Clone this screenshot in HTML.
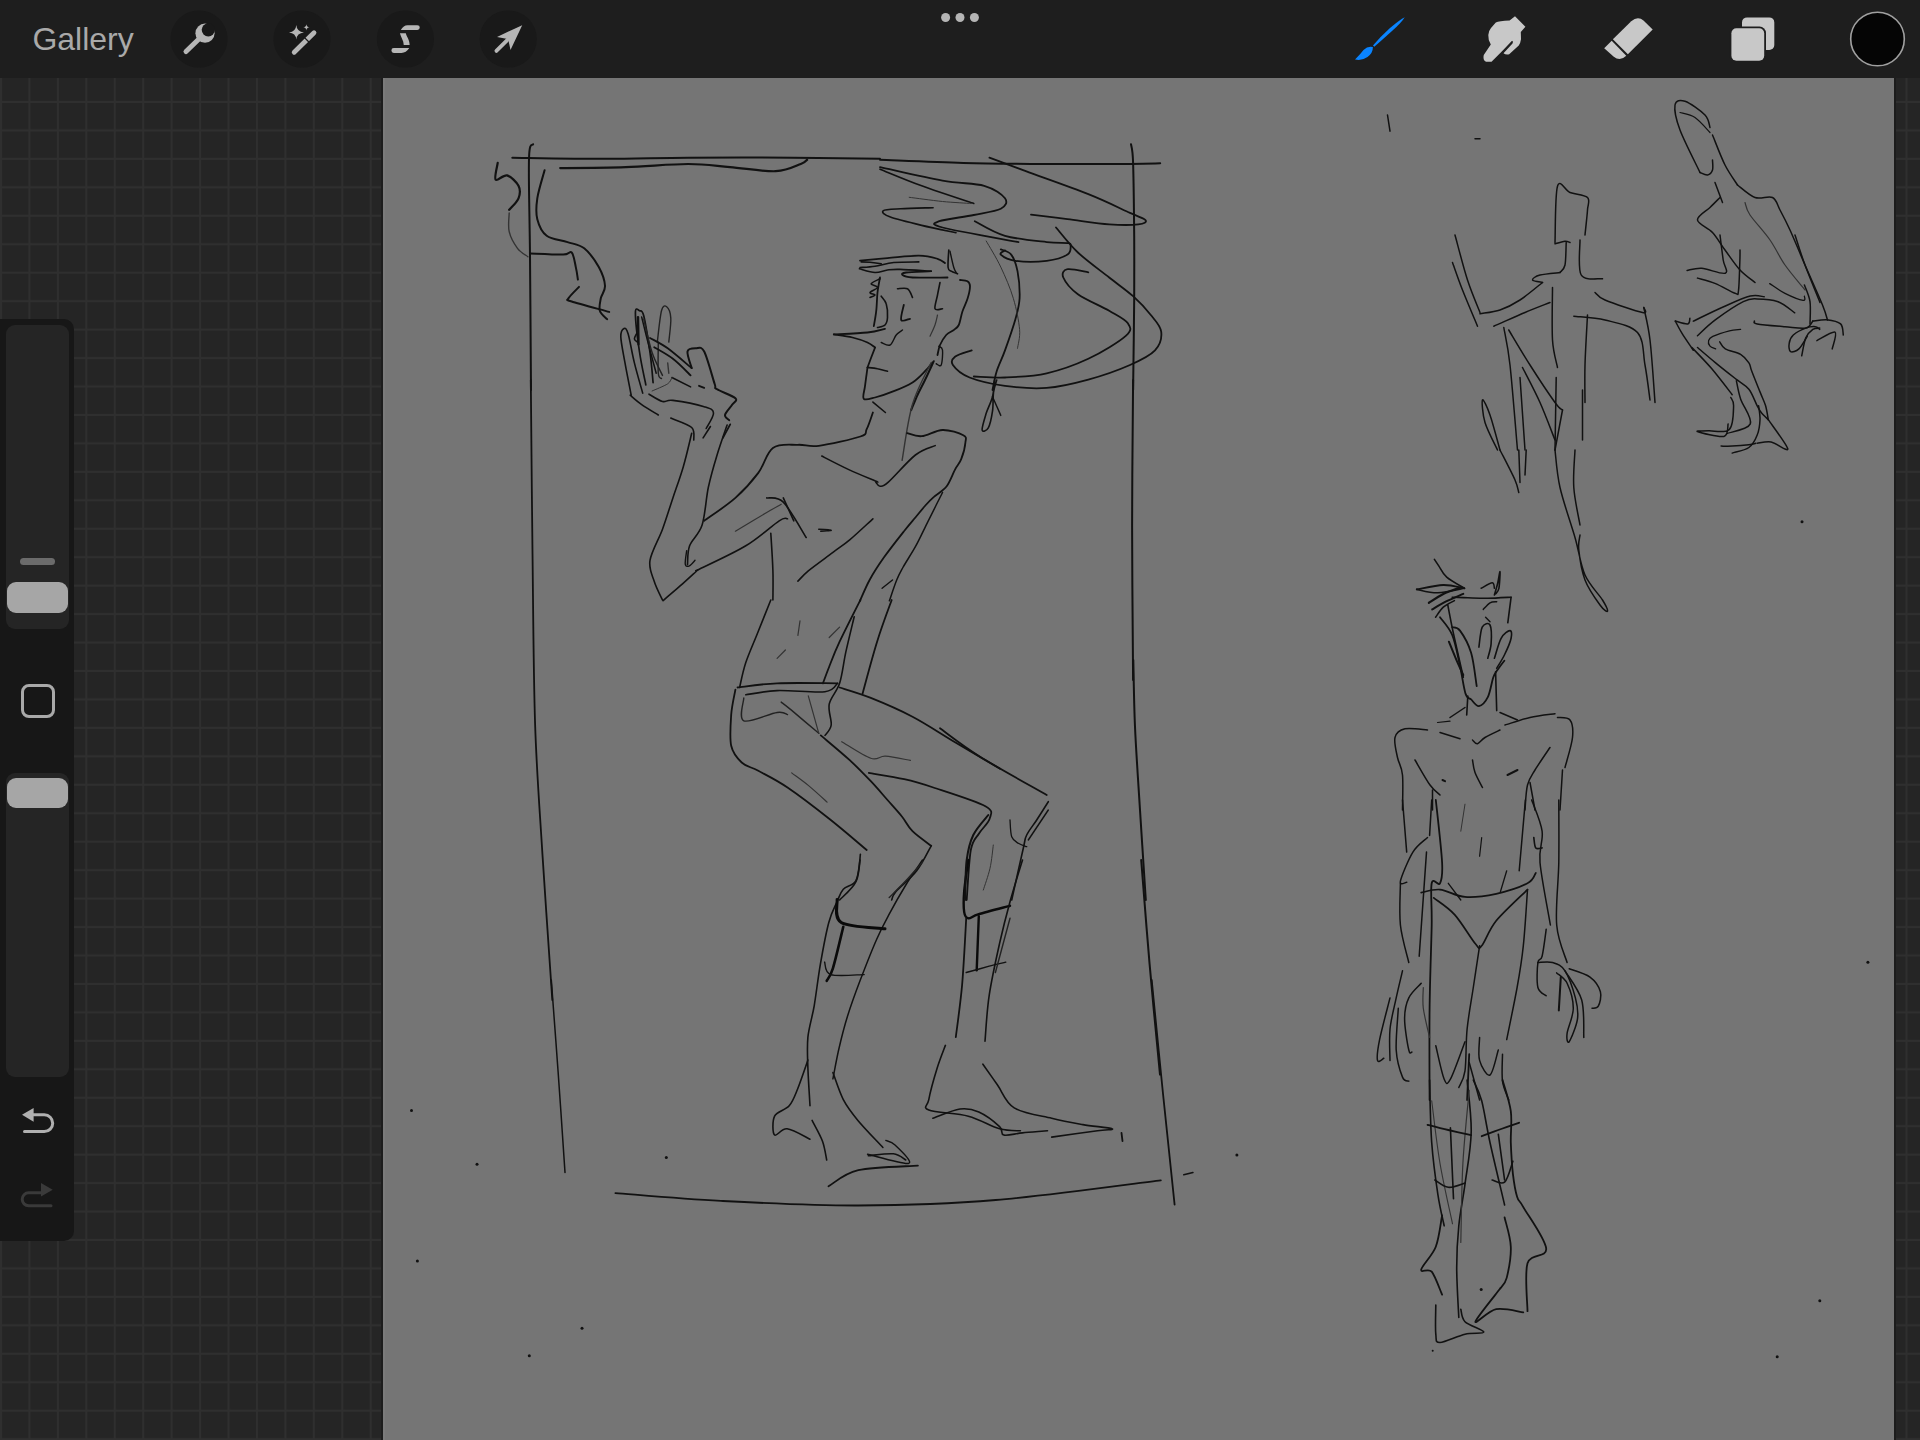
<!DOCTYPE html>
<html><head><meta charset="utf-8">
<style>
html,body{margin:0;padding:0;width:1920px;height:1440px;overflow:hidden;background:#252525;}
body{position:relative;font-family:"Liberation Sans",sans-serif;}
#grid{position:absolute;left:0;top:0;width:1920px;height:1440px;}
#topbar{position:absolute;left:0;top:0;width:1920px;height:78px;background:#1e1e1e;}
#canvas{position:absolute;left:383px;top:78px;width:1511px;height:1362px;background:#757575;}
#gallery{position:absolute;left:32.4px;top:14.8px;font-size:32px;line-height:48px;color:#a9a9a9;letter-spacing:0px;}
#side{position:absolute;left:-12px;top:319px;width:86px;height:922px;background:#171717;border-radius:10px;}
.track{position:absolute;left:6px;width:63px;background:#252525;border-radius:9px;}
.thumb{position:absolute;left:7px;width:61px;background:#a6a6a6;border-radius:9px;}
svg{position:absolute;left:0;top:0;}
</style></head><body>
<svg id="grid" width="1920" height="1440">
<defs>
<pattern id="gp" x="0" y="0" width="28.44" height="28.45" patternUnits="userSpaceOnUse">
<rect x="0" y="15.65" width="28.44" height="2" fill="#2f2f2f"/>
<rect x="0" y="0" width="2" height="28.45" fill="#2f2f2f"/>
</pattern>
</defs>
<rect x="0" y="0" width="1920" height="1440" fill="url(#gp)"/>
</svg>
<div style="position:absolute;left:381px;top:78px;width:1515px;height:1362px;background:#1c1c1c;"></div>
<div id="canvas"></div>
<div style="position:absolute;left:383px;top:78px;width:2px;height:1362px;background:#7a7a7a;"></div>
<div id="topbar"></div>
<div id="gallery">Gallery</div>
<div id="side"></div>
<div class="track" style="top:325px;height:304px;"></div>
<div style="position:absolute;left:20px;top:558px;width:35px;height:7px;border-radius:4px;background:#6b6b6b;"></div>
<div class="thumb" style="top:582px;height:31px;"></div>
<div style="position:absolute;left:21px;top:684px;width:28px;height:28px;border:3px solid #a9a9a9;border-radius:8px;"></div>
<div class="track" style="top:773px;height:304px;"></div>
<div class="thumb" style="top:778px;height:30px;"></div>
<svg width="1920" height="1440" style="pointer-events:none">
<!-- top bar icons -->
<circle cx="199" cy="39" r="28.6" fill="#191919"/>
<circle cx="302" cy="39" r="28.6" fill="#191919"/>
<circle cx="405.4" cy="39" r="28.6" fill="#191919"/>
<circle cx="508.2" cy="39" r="28.6" fill="#191919"/>
<!-- wrench -->
<line x1="186" y1="51.5" x2="201" y2="37" stroke="#b6b6b6" stroke-width="5" stroke-linecap="round"/>
<circle cx="205" cy="33.2" r="9.6" fill="#b6b6b6"/>
<circle cx="208.3" cy="29.8" r="6.6" fill="#191919"/>
<!-- magic wand -->
<line x1="294.2" y1="52.2" x2="314" y2="32.7" stroke="#b6b6b6" stroke-width="4.8" stroke-linecap="round"/>
<line x1="303.3" y1="36.4" x2="309.6" y2="42.7" stroke="#191919" stroke-width="1.3"/>
<path d="M296.3 25.1 Q296.8 31.9 304 32.4 Q296.8 32.9 296.3 39.5 Q295.8 32.9 289 32.4 Q295.8 31.9 296.3 25.1Z" fill="#b6b6b6"/>
<path d="M306.4 24.2 Q306.7 27 309.5 27.3 Q306.7 27.6 306.4 30.4 Q306.1 27.6 303.3 27.3 Q306.1 27 306.4 24.2Z" fill="#b6b6b6"/>
<!-- selection S -->
<path d="M400.8 29.9 Q403.5 25.4 407.5 25.3 L417.4 25.2 A2.35 2.35 0 0 1 417.4 29.9 Z" fill="#b6b6b6"/>
<path d="M399.9 33.2 L405.8 33.2 C406.5 36.5 409.6 39.5 409.65 44.9 L403.75 44.9 C403.7 40.5 400.8 37 399.9 33.2 Z" fill="#b6b6b6"/>
<path d="M409.3 48 Q406 52.9 401.5 52.9 L393.8 52.9 A2.35 2.35 0 0 1 393.8 48.1 Z" fill="#b6b6b6"/>
<!-- arrow -->
<line x1="496.4" y1="50.9" x2="507" y2="40.3" stroke="#b6b6b6" stroke-width="3.8" stroke-linecap="round"/>
<path d="M522.2 25.2 L497 36.9 L506.3 38.7 L508.5 40.8 L510.5 50.1 Z" fill="#b6b6b6"/>
<!-- dots -->
<circle cx="945.6" cy="17.5" r="4.5" fill="#b5b5b5"/>
<circle cx="960" cy="17.5" r="4.5" fill="#b5b5b5"/>
<circle cx="974.4" cy="17.5" r="4.5" fill="#b5b5b5"/>
<!-- brush -->
<path d="M1404.7 17.2 Q1402 22 1392 31 Q1382 40 1374.3 46.8 L1373 45.5 Q1380 37 1390 28 Q1400 19.5 1404.7 17.2Z" fill="#0a84ff"/>
<path d="M1372.9 47 Q1368 45.5 1363.5 50 Q1360.5 54 1355 59.5 Q1362 61 1367.5 57 Q1373 53 1372.9 47Z" fill="#0a84ff"/>
<!-- smudge -->
<path d="M1515 16.25 L1525.4 26.7 L1520.8 32.1 L1521 39.2 Q1520.5 43 1518.75 45.4 L1509.2 54.2 Q1506 55.2 1503.5 53.2 L1512.5 43.5 Q1513.8 41.5 1512 40.8 L1502 51.25 L1491.5 61.7 L1486 61.8 Q1482.5 60 1483.75 55 L1490.8 44.6 Q1488 40 1488.3 35 Q1488.5 31 1491 28 L1495.8 22.5 Q1499 20.8 1509.6 20.4 Z" fill="#c8c8c8"/>
<!-- eraser -->
<path d="M1612.9 39.2 L1631.25 21.25 Q1637.9 15.6 1643.75 20.8 L1652.7 29.6 L1627.9 54.2 Z" fill="#c8c8c8"/>
<path d="M1611.7 40.8 L1626.25 55.8 Q1620 62 1613.5 56.5 L1604.2 48.3 Z" fill="#c8c8c8"/>
<!-- layers -->
<rect x="1742" y="17.4" width="32.3" height="32.6" rx="5" fill="#c8c8c8"/>
<rect x="1729.6" y="26.5" width="36.4" height="36" rx="6.5" fill="#1e1e1e"/>
<rect x="1731.4" y="28.3" width="32.8" height="32.4" rx="5" fill="#c8c8c8"/>
<!-- color -->
<circle cx="1877.5" cy="39" r="26.8" fill="#050505" stroke="#a0a0a0" stroke-width="1.6"/>
<!-- undo / redo -->
<path d="M33 1114.8 L44.3 1114.8 A8.4 8.4 0 0 1 44.3 1131.6 L24.5 1131.6" fill="none" stroke="#b0b0b0" stroke-width="3" stroke-linecap="round"/>
<path d="M22 1114.8 L33.6 1108 L33.6 1121.7 Z" fill="#b0b0b0"/>
<path d="M41.5 1192.8 L28.7 1192.8 A6.5 6.5 0 0 0 28.7 1205.8 L51 1205.8" fill="none" stroke="#3a3a3a" stroke-width="3" stroke-linecap="round"/>
<path d="M52.7 1189.8 L41 1183 L41 1196.6 Z" fill="#3a3a3a"/>
</svg>
<svg width="1920" height="1440" style="position:absolute;left:0;top:0" fill="none" stroke-linecap="round" stroke-linejoin="round">
<path d="M512.3 157.7 C527.7 157.9 575.7 158.8 605.0 158.8 C634.3 158.8 657.1 157.9 688.3 157.7 C719.6 157.5 760.6 157.5 792.5 157.7 C824.4 157.9 865.4 158.6 880.0 158.8" stroke="#111" stroke-width="2.0"/>
<path d="M533.1 144.2 C532.4 146.6 529.5 140.0 529.0 158.8 C528.4 177.5 529.7 218.1 530.0 256.7 C530.3 295.2 530.9 367.8 531.0 390.0" stroke="#111" stroke-width="2.0"/>
<path d="M560.2 168.1 C571.1 168.0 604.5 167.8 625.8 167.1 C647.2 166.4 671.0 164.0 688.3 164.0 C705.7 164.0 715.4 165.9 730.0 167.1 C744.6 168.3 764.0 171.8 775.8 171.2 C787.6 170.7 795.6 165.9 800.8 164.0 C806.0 162.0 806.0 160.5 807.1 159.8" stroke="#111" stroke-width="2.2"/>
<path d="M497.7 162.9 C497.4 165.7 494.1 177.5 495.6 179.6 C497.2 181.7 503.3 174.4 507.1 175.4 C510.9 176.5 516.6 182.0 518.5 185.8 C520.5 189.7 520.1 194.3 518.5 198.3 C517.0 202.3 510.7 207.9 509.2 209.8" stroke="#111" stroke-width="2.2"/>
<path d="M509.2 212.9 C509.2 216.0 507.8 225.8 509.2 231.7 C510.6 237.6 514.4 244.2 517.5 248.3 C520.6 252.5 526.2 255.3 527.9 256.7" stroke="#333" stroke-width="1.4"/>
<path d="M544.6 170.2 C543.4 174.9 538.5 190.2 537.3 198.3 C536.1 206.5 535.7 212.9 537.3 219.2 C538.9 225.4 541.6 232.0 546.7 235.8 C551.7 239.7 561.2 240.0 567.5 242.1 C573.8 244.2 579.0 244.2 584.2 248.3 C589.4 252.5 595.3 260.8 598.8 267.1 C602.2 273.3 604.7 280.6 605.0 285.8 C605.3 291.0 601.7 294.2 600.8 298.3 C600.0 302.5 598.8 307.4 599.8 310.8 C600.8 314.3 605.9 317.8 607.1 319.2" stroke="#111" stroke-width="2.0"/>
<path d="M530.0 253.5 C535.6 253.7 556.4 254.8 563.3 254.6 C570.3 254.4 569.6 250.4 571.7 252.5 C573.8 254.6 574.8 262.6 575.8 267.1 C576.9 271.6 577.6 277.5 577.9 279.6" stroke="#111" stroke-width="2.0"/>
<path d="M579.0 286.9 C577.2 288.8 569.8 295.9 568.5 298.3 C567.3 300.8 564.9 299.2 571.7 301.5 C578.4 303.7 602.9 310.1 609.2 311.9" stroke="#111" stroke-width="2.0"/>
<path d="M880.0 159.8 C893.9 160.3 935.6 162.2 963.3 162.9 C991.1 163.6 1018.9 163.8 1046.7 164.0 C1074.4 164.1 1111.1 164.1 1130.0 164.0 C1148.9 163.9 1155.2 163.4 1160.2 163.3" stroke="#111" stroke-width="2.0"/>
<path d="M1131.0 144.2 C1131.4 147.3 1132.6 147.6 1133.1 162.9 C1133.6 178.2 1134.0 213.3 1134.2 235.8 C1134.3 258.4 1134.3 272.6 1134.2 298.3 C1134.0 324.0 1133.3 374.7 1133.1 390.0" stroke="#111" stroke-width="2.0"/>
<path d="M989.4 157.7 C995.5 160.0 1009.3 165.2 1025.8 171.2 C1042.3 177.3 1071.0 187.2 1088.3 194.2 C1105.7 201.1 1120.5 208.6 1130.0 212.9 C1139.5 217.3 1144.2 218.3 1145.6 220.2 C1147.0 222.1 1144.4 223.7 1138.3 224.4 C1132.3 225.1 1121.0 225.2 1109.2 224.4 C1097.4 223.5 1080.5 220.8 1067.5 219.2 C1054.5 217.5 1037.1 215.3 1031.0 214.6" stroke="#111" stroke-width="1.8"/>
<path d="M880.0 169.2 C886.9 171.9 906.0 180.1 921.7 185.8 C937.3 191.6 965.1 200.6 973.8 203.5" stroke="#111" stroke-width="1.6"/>
<path d="M880.0 167.1 C890.4 169.3 925.1 177.5 942.5 180.6 C959.9 183.8 973.8 182.9 984.2 185.8 C994.6 188.8 1002.2 194.5 1005.0 198.3 C1007.8 202.2 1006.0 206.0 1000.8 208.8 C995.6 211.5 984.0 212.9 973.8 215.0 C963.5 217.1 944.6 219.2 939.4 221.2 C934.2 223.3 929.3 224.0 942.5 227.5 C955.7 231.0 1005.9 239.7 1018.5 242.1" stroke="#111" stroke-width="1.8"/>
<path d="M909.2 197.3 C914.7 198.0 932.1 200.4 942.5 201.5 C952.9 202.5 966.8 203.2 971.7 203.5" stroke="#333" stroke-width="1.0"/>
<path d="M933.1 207.7 C927.7 207.9 909.2 208.2 900.8 208.8 C892.5 209.3 884.9 209.4 883.1 210.8 C881.4 212.2 884.0 214.7 890.4 217.1 C896.8 219.5 910.7 222.8 921.7 225.4 C932.6 228.0 950.3 231.5 956.0 232.7" stroke="#111" stroke-width="1.6"/>
<path d="M974.8 221.2 C979.8 223.7 993.0 232.4 1005.0 235.8 C1017.0 239.3 1036.2 240.9 1046.7 242.1 C1057.1 243.3 1063.5 242.6 1067.5 243.1 C1071.5 243.6 1070.6 243.3 1070.6 245.2 C1070.6 247.1 1071.5 252.0 1067.5 254.6 C1063.5 257.2 1055.3 259.8 1046.7 260.8 C1038.0 261.9 1023.1 261.9 1015.4 260.8 C1007.8 259.8 1002.6 256.3 1000.8 254.6 C999.1 252.8 1004.3 251.1 1005.0 250.4" stroke="#111" stroke-width="1.8"/>
<path d="M1056.0 227.5 C1059.7 231.7 1069.1 244.2 1077.9 252.5 C1086.8 260.8 1100.0 270.2 1109.2 277.5 C1118.4 284.8 1126.2 290.0 1133.1 296.2 C1140.1 302.5 1146.1 309.1 1150.8 315.0 C1155.5 320.9 1160.6 325.8 1161.2 331.7 C1161.9 337.6 1160.2 344.9 1155.0 350.4 C1149.8 356.0 1141.1 360.1 1130.0 365.0 C1118.9 369.9 1102.2 375.8 1088.3 379.6 C1074.4 383.4 1060.6 386.9 1046.7 387.9 C1032.8 389.0 1017.8 387.6 1005.0 385.8 C992.2 384.1 978.3 381.0 969.6 377.5 C960.9 374.0 955.3 368.5 952.9 365.0 C950.5 361.5 951.9 359.1 955.0 356.7 C958.1 354.2 968.9 351.5 971.7 350.4" stroke="#111" stroke-width="1.8"/>
<path d="M1088.3 272.3 C1084.9 271.8 1071.7 268.3 1067.5 269.2 C1063.3 270.0 1061.6 273.3 1063.3 277.5 C1065.1 281.7 1070.3 288.6 1077.9 294.2 C1085.6 299.7 1100.8 306.0 1109.2 310.8 C1117.5 315.7 1125.1 319.2 1127.9 323.3 C1130.7 327.5 1132.4 329.9 1125.8 335.8 C1119.2 341.7 1101.5 352.5 1088.3 358.8 C1075.1 365.0 1060.6 370.2 1046.7 373.3 C1032.8 376.5 1017.2 377.0 1005.0 377.5 C992.8 378.0 979.0 376.6 973.8 376.5" stroke="#111" stroke-width="1.8"/>
<path d="M1000.8 249.4 C1002.6 250.2 1008.5 250.9 1011.2 254.6 C1014.0 258.2 1016.1 264.0 1017.5 271.2 C1018.9 278.5 1019.9 290.3 1019.6 298.3 C1019.2 306.3 1017.8 310.5 1015.4 319.2 C1013.0 327.8 1008.1 341.7 1005.0 350.4 C1001.9 359.1 998.8 364.7 996.7 371.2 C994.6 377.8 993.2 386.9 992.5 390.0" stroke="#111" stroke-width="1.8"/>
<path d="M986.2 241.0 C988.7 245.4 996.3 257.5 1000.8 267.1 C1005.3 276.6 1010.2 287.9 1013.3 298.3 C1016.5 308.8 1018.9 321.3 1019.6 329.6 C1020.3 337.9 1017.8 345.2 1017.5 348.3" stroke="#333" stroke-width="1.0"/>
<path d="M860.0 260.6 C864.6 260.2 877.7 259.0 887.5 258.1 C897.3 257.3 910.4 255.5 918.8 255.6 C927.1 255.7 933.1 257.5 937.5 258.8 C941.9 260.0 943.8 262.4 945.0 263.1" stroke="#111" stroke-width="1.8"/>
<path d="M860.0 267.5 C862.5 267.3 869.4 267.1 875.0 266.2 C880.6 265.4 886.5 263.2 893.8 262.5 C901.0 261.8 914.6 262.0 918.8 261.9" stroke="#111" stroke-width="1.6"/>
<path d="M861.2 261.9 C862.7 261.9 866.7 261.9 870.0 262.2 C873.3 262.6 879.4 263.5 881.2 263.8" stroke="#111" stroke-width="1.6"/>
<path d="M859.4 268.8 C862.0 269.4 870.3 272.3 875.0 272.5 C879.7 272.7 883.3 270.5 887.5 270.0 C891.7 269.5 892.7 269.2 900.0 269.4 C907.3 269.6 926.0 270.9 931.2 271.2" stroke="#111" stroke-width="1.6"/>
<path d="M931.2 271.2 C927.1 271.5 911.0 271.9 906.2 272.5 C901.5 273.1 901.5 274.2 902.5 275.0 C903.5 275.8 905.0 277.1 912.5 277.5 C920.0 277.9 941.7 277.5 947.5 277.5" stroke="#111" stroke-width="1.8"/>
<path d="M948.8 250.0 C948.6 252.9 947.7 264.0 948.1 267.5 C948.5 271.0 949.7 270.2 951.2 271.2 C952.8 272.3 956.5 273.3 957.5 273.8" stroke="#111" stroke-width="1.6"/>
<path d="M950.0 251.2 C950.6 254.0 952.7 264.0 953.8 267.5 C954.8 271.0 955.8 271.7 956.2 272.5" stroke="#111" stroke-width="1.4"/>
<path d="M960.0 280.0 C961.2 280.2 965.8 280.2 967.5 281.2 C969.2 282.3 970.0 283.3 970.0 286.2 C970.0 289.2 968.8 294.6 967.5 298.8 C966.2 302.9 964.0 306.9 962.5 311.2 C961.0 315.6 960.2 321.9 958.8 325.0 C957.3 328.1 955.8 328.3 953.8 330.0 C951.7 331.7 948.5 332.5 946.2 335.0 C944.0 337.5 941.5 341.7 940.0 345.0 C938.5 348.3 937.9 353.3 937.5 355.0" stroke="#111" stroke-width="1.8"/>
<path d="M880.0 277.5 C879.6 280.0 878.1 286.9 877.5 292.5 C876.9 298.1 876.9 305.6 876.2 311.2 C875.6 316.9 874.2 323.8 873.8 326.2" stroke="#111" stroke-width="1.8"/>
<path d="M880.0 278.8 C878.5 279.6 871.7 282.3 871.2 283.8 C870.8 285.2 877.7 286.0 877.5 287.5 C877.3 289.0 870.4 291.2 870.0 292.5 C869.6 293.8 875.0 294.2 875.0 295.0 C875.0 295.8 870.8 297.1 870.0 297.5" stroke="#111" stroke-width="1.6"/>
<path d="M885.0 328.8 C882.1 329.4 876.0 331.6 867.5 332.5 C859.0 333.4 839.4 334.1 833.8 334.4" stroke="#111" stroke-width="1.8"/>
<path d="M833.8 334.4 C836.9 334.9 846.9 336.1 852.5 337.5 C858.1 338.9 863.8 340.8 867.5 342.5 C871.2 344.2 873.8 346.7 875.0 347.5" stroke="#111" stroke-width="1.8"/>
<path d="M875.0 347.5 C874.4 349.2 872.5 354.2 871.2 357.5 C870.0 360.8 868.1 365.8 867.5 367.5" stroke="#111" stroke-width="1.8"/>
<path d="M867.5 367.5 C869.2 367.7 874.2 368.1 877.5 368.8 C880.8 369.4 885.8 370.8 887.5 371.2" stroke="#111" stroke-width="1.6"/>
<path d="M867.5 367.5 C867.1 370.6 865.6 381.0 865.0 386.2 C864.4 391.5 862.1 396.9 863.8 398.8 C865.4 400.6 870.0 398.8 875.0 397.5 C880.0 396.2 887.5 393.8 893.8 391.2 C900.0 388.8 907.3 385.8 912.5 382.5 C917.7 379.2 921.7 374.6 925.0 371.2 C928.3 367.9 931.2 364.0 932.5 362.5" stroke="#111" stroke-width="1.8"/>
<path d="M881.2 296.2 C882.1 297.5 885.2 300.2 886.2 303.8 C887.3 307.3 887.7 314.0 887.5 317.5 C887.3 321.0 886.7 323.3 885.0 325.0 C883.3 326.7 878.8 327.1 877.5 327.5" stroke="#111" stroke-width="1.6"/>
<path d="M897.5 288.8 C899.2 288.8 905.0 287.3 907.5 288.8 C910.0 290.2 911.7 296.0 912.5 297.5" stroke="#111" stroke-width="1.6"/>
<path d="M903.8 305.0 C903.3 307.5 900.2 317.7 901.2 320.0 C902.3 322.3 908.5 319.0 910.0 318.8" stroke="#111" stroke-width="1.8"/>
<path d="M940.0 282.5 C939.6 284.6 938.3 290.6 937.5 295.0 C936.7 299.4 934.2 306.5 935.0 308.8 C935.8 311.0 941.2 308.8 942.5 308.8" stroke="#111" stroke-width="1.6"/>
<path d="M902.5 330.0 C901.5 330.8 898.3 332.5 896.2 335.0 C894.2 337.5 892.5 343.8 890.0 345.0 C887.5 346.2 882.7 342.9 881.2 342.5" stroke="#111" stroke-width="1.4"/>
<path d="M933.8 361.2 C932.3 364.4 927.7 374.4 925.0 380.0 C922.3 385.6 919.8 390.0 917.5 395.0 C915.2 400.0 912.3 407.5 911.2 410.0" stroke="#111" stroke-width="2.0"/>
<path d="M937.5 315.0 C937.1 316.7 936.2 321.5 935.0 325.0 C933.8 328.5 930.8 334.4 930.0 336.2" stroke="#333" stroke-width="1.2"/>
<path d="M938.8 346.2 C939.4 346.9 942.1 346.9 942.5 350.0 C942.9 353.1 942.3 362.7 941.2 365.0 C940.2 367.3 937.1 364.0 936.2 363.8" stroke="#111" stroke-width="1.4"/>
<path d="M631.2 395.2 C630.2 389.8 626.7 372.6 625.0 362.9 C623.3 353.2 621.0 342.6 620.8 336.9 C620.7 331.1 622.7 329.1 624.0 328.5 C625.2 328.0 626.4 328.0 628.1 333.8 C629.9 339.5 631.9 353.0 634.4 362.9 C636.8 372.8 641.3 388.1 642.7 393.1" stroke="#111" stroke-width="1.6"/>
<path d="M645.8 384.8 C644.8 379.4 641.3 364.5 639.6 352.5 C637.8 340.5 635.4 319.9 635.4 312.9 C635.4 306.0 638.2 310.3 639.6 310.8 C641.0 311.4 642.0 309.1 643.8 316.0 C645.5 323.0 648.4 341.4 650.0 352.5 C651.6 363.6 652.6 377.7 653.1 382.7" stroke="#111" stroke-width="1.7"/>
<path d="M638.0 317.1 L638.5 344.2" stroke="#111" stroke-width="2.4"/>
<path d="M636.5 333.8 C636.1 334.6 634.2 337.6 634.4 339.0 C634.5 340.3 637.0 341.6 637.5 342.1" stroke="#111" stroke-width="1.6"/>
<path d="M641.7 317.1 C642.7 321.2 645.5 332.7 647.9 342.1 C650.3 351.5 654.9 368.1 656.2 373.3" stroke="#111" stroke-width="1.5"/>
<path d="M643.8 319.2 C645.1 324.7 649.0 343.1 652.1 352.5 C655.2 361.9 660.8 371.6 662.5 375.4" stroke="#222" stroke-width="1.4"/>
<path d="M657.3 342.1 C658.0 336.9 659.9 316.7 661.5 310.8 C663.0 304.9 665.1 305.5 666.7 306.7 C668.2 307.9 670.5 312.2 670.8 318.1 C671.2 324.0 669.1 338.1 668.8 342.1" stroke="#222" stroke-width="1.4"/>
<path d="M658.3 342.1 C658.3 347.3 657.8 367.3 658.3 373.3 C658.9 379.4 660.9 377.7 661.5 378.5" stroke="#222" stroke-width="1.4"/>
<path d="M667.7 362.9 L668.8 373.3" stroke="#333" stroke-width="1.4"/>
<path d="M650.0 337.9 C653.0 339.7 660.8 343.3 667.7 348.3 C674.7 353.4 687.7 364.8 691.7 368.1" stroke="#111" stroke-width="1.8"/>
<path d="M654.2 347.3 C657.3 349.2 666.8 354.1 672.9 358.8 C679.0 363.4 687.7 372.6 690.6 375.4" stroke="#111" stroke-width="1.8"/>
<path d="M691.7 368.1 C691.0 365.3 686.8 354.8 687.5 351.5 C688.2 348.2 693.1 348.3 695.8 348.3 C698.6 348.3 701.0 345.6 704.2 351.5 C707.3 357.4 712.5 377.5 714.6 383.8 C716.7 390.0 713.2 386.5 716.7 389.0 C720.1 391.4 732.8 395.7 735.4 398.3 C738.0 400.9 734.0 401.8 732.3 404.6 C730.6 407.4 725.5 412.4 725.0 415.0 C724.5 417.6 728.5 419.3 729.2 420.2" stroke="#111" stroke-width="2.0"/>
<path d="M671.9 377.5 L690.6 386.9" stroke="#111" stroke-width="1.6"/>
<path d="M699.0 385.8 L704.2 387.9" stroke="#111" stroke-width="1.8"/>
<path d="M630.2 395.2 C632.1 396.8 637.0 401.3 641.7 404.6 C646.4 407.9 655.6 413.3 658.3 415.0" stroke="#111" stroke-width="1.6"/>
<path d="M670.8 418.1 C674.3 419.7 687.8 423.9 691.7 427.5 C695.5 431.1 693.4 437.9 693.8 440.0" stroke="#111" stroke-width="1.6"/>
<path d="M649.0 394.2 C651.2 395.4 658.5 400.4 662.5 401.5 C666.5 402.5 666.0 399.5 672.9 400.4 C679.9 401.3 697.4 404.6 704.2 406.7 C710.9 408.8 713.2 409.3 713.5 412.9 C713.9 416.6 707.5 425.9 706.2 428.5" stroke="#111" stroke-width="1.6"/>
<path d="M710.4 426.5 L703.1 437.9" stroke="#111" stroke-width="1.6"/>
<path d="M730.2 424.4 L722.9 437.9" stroke="#111" stroke-width="1.8"/>
<path d="M652.1 391.0 C654.7 389.8 664.4 386.0 667.7 383.8 C671.0 381.5 671.2 378.5 671.9 377.5" stroke="#333" stroke-width="1.0"/>
<path d="M691.7 433.3 C690.3 438.9 686.5 455.9 683.3 466.7 C680.2 477.4 676.4 487.5 672.9 497.9 C669.4 508.3 666.3 518.8 662.5 529.2 C658.7 539.6 651.4 551.7 650.0 560.4 C648.6 569.1 652.1 574.7 654.2 581.2 C656.2 587.8 661.1 596.9 662.5 600.0" stroke="#111" stroke-width="1.6"/>
<path d="M727.1 425.0 C725.3 430.2 719.8 445.8 716.7 456.2 C713.5 466.7 710.8 476.0 708.3 487.5 C705.9 499.0 705.2 515.3 702.1 525.0 C699.0 534.7 692.0 539.2 689.6 545.8 C687.2 552.4 687.8 561.5 687.5 564.6" stroke="#111" stroke-width="1.6"/>
<path d="M704.2 520.8 C709.4 517.0 726.4 505.9 735.4 497.9 C744.4 489.9 752.1 481.2 758.3 472.9 C764.6 464.6 766.3 452.6 772.9 447.9 C779.5 443.2 790.3 445.1 797.9 444.8 C805.6 444.4 808.3 447.2 818.8 445.8 C829.2 444.4 852.4 439.2 860.4 436.5 C868.4 433.7 864.6 433.2 866.7 429.2 C868.8 425.2 871.9 415.3 872.9 412.5" stroke="#111" stroke-width="1.8"/>
<path d="M872.9 402.1 L885.4 412.5" stroke="#111" stroke-width="1.6"/>
<path d="M931.2 362.5 C928.1 369.4 917.4 387.8 912.5 404.2 C907.6 420.5 903.8 451.0 902.1 460.4" stroke="#333" stroke-width="1.4"/>
<path d="M907.1 433.1 C909.5 433.6 915.8 436.8 921.7 436.2 C927.6 435.7 935.6 430.2 942.5 430.0 C949.4 429.8 959.5 433.1 963.3 435.2 C967.2 437.3 965.8 438.5 965.4 442.5 C965.1 446.5 963.0 454.7 961.2 459.2 C959.5 463.7 957.4 465.1 955.0 469.6 C952.6 474.1 950.1 481.7 946.7 486.2 C943.2 490.8 937.6 493.5 934.2 496.7 C930.7 499.8 929.0 501.5 925.8 505.0 C922.7 508.5 918.9 513.3 915.4 517.5 C911.9 521.7 910.2 523.4 905.0 530.0 C899.8 536.6 890.1 548.8 884.2 557.1 C878.3 565.4 873.6 572.7 869.6 580.0 C865.6 587.3 861.6 597.4 860.0 600.8" stroke="#111" stroke-width="1.8"/>
<path d="M942.5 492.5 C941.5 494.6 939.0 499.4 936.2 505.0 C933.5 510.6 929.3 518.9 925.8 525.8 C922.4 532.8 919.2 539.7 915.4 546.7 C911.6 553.6 906.0 561.9 902.9 567.5 C899.8 573.1 898.9 574.4 896.7 580.0 C894.4 585.6 890.6 597.4 889.4 600.8" stroke="#111" stroke-width="1.5"/>
<path d="M882.1 588.3 L892.5 580.0" stroke="#111" stroke-width="1.4"/>
<path d="M935.2 445.6 C931.9 447.2 923.2 448.9 915.4 455.0 C907.6 461.1 894.2 476.9 888.3 482.1 C882.4 487.3 882.1 486.2 880.0 486.2 C877.9 486.2 876.5 482.8 875.8 482.1" stroke="#111" stroke-width="1.6"/>
<path d="M821.7 456.0 C826.2 458.3 839.4 465.2 848.8 469.6 C858.1 473.9 873.1 480.0 877.9 482.1" stroke="#111" stroke-width="1.5"/>
<path d="M872.9 518.8 C869.1 522.2 856.6 534.0 850.0 539.6 C843.4 545.1 840.3 546.9 833.3 552.1 C826.4 557.3 814.2 566.0 808.3 570.8 C802.4 575.7 799.7 579.5 797.9 581.2" stroke="#111" stroke-width="1.6"/>
<path d="M695.8 570.8 C704.2 566.7 731.9 554.2 745.8 545.8 C759.7 537.5 772.2 525.3 779.2 520.8 C786.1 516.3 786.1 519.1 787.5 518.8" stroke="#111" stroke-width="1.6"/>
<path d="M735.4 531.2 C740.6 528.1 759.0 517.0 766.7 512.5 C774.3 508.0 778.8 505.6 781.2 504.2" stroke="#333" stroke-width="1.2"/>
<path d="M766.7 497.9 C769.4 498.6 776.7 495.5 783.3 502.1 C789.9 508.7 802.4 531.6 806.2 537.5" stroke="#111" stroke-width="1.6"/>
<path d="M783.3 497.9 L793.8 520.8" stroke="#111" stroke-width="1.6"/>
<path d="M770.8 533.3 C771.2 539.6 772.6 559.7 772.9 570.8 C773.3 581.9 772.9 595.1 772.9 600.0" stroke="#111" stroke-width="1.6"/>
<path d="M818.8 529.2 C820.8 529.3 830.9 529.9 831.2 530.2 C831.6 530.6 822.6 531.1 820.8 531.2" stroke="#111" stroke-width="1.6"/>
<path d="M994.6 380.0 C994.2 382.8 993.9 391.1 992.5 396.7 C991.1 402.2 988.0 407.8 986.2 413.3 C984.5 418.9 981.7 427.6 982.1 430.0 C982.4 432.4 986.6 431.0 988.3 427.9 C990.1 424.8 991.6 417.2 992.5 411.2 C993.4 405.3 992.8 397.7 993.5 392.5 C994.2 387.3 996.1 382.1 996.7 380.0" stroke="#111" stroke-width="1.6"/>
<path d="M992.5 396.7 L1000.8 415.4" stroke="#111" stroke-width="1.4"/>
<path d="M1133.1 380.0 C1133.0 404.3 1132.1 475.8 1132.1 525.8 C1132.1 575.8 1133.0 654.3 1133.1 680.0" stroke="#111" stroke-width="2.0"/>
<path d="M770.8 600.0 C768.8 605.2 762.5 620.8 758.3 631.2 C754.2 641.7 749.0 653.1 745.8 662.5 C742.7 671.9 740.6 683.3 739.6 687.5" stroke="#111" stroke-width="1.6"/>
<path d="M860.4 600.0 C856.9 606.9 844.8 630.6 839.6 641.7 C834.4 652.8 831.9 659.7 829.2 666.7 C826.4 673.6 824.0 680.6 822.9 683.3" stroke="#111" stroke-width="1.8"/>
<path d="M891.7 600.0 C889.2 606.9 881.9 626.0 877.1 641.7 C872.2 657.3 864.9 685.1 862.5 693.8" stroke="#111" stroke-width="1.8"/>
<path d="M854.2 616.7 C852.8 622.6 848.3 641.0 845.8 652.1 C843.4 663.2 842.4 674.7 839.6 683.3 C836.8 692.0 830.6 697.2 829.2 704.2 C827.8 711.1 831.9 719.8 831.2 725.0 C830.6 730.2 826.0 733.7 825.0 735.4" stroke="#111" stroke-width="1.6"/>
<path d="M737.5 687.5 C744.1 686.8 760.4 684.0 777.1 683.3 C793.8 682.6 827.4 683.3 837.5 683.3" stroke="#111" stroke-width="1.8"/>
<path d="M745.8 694.8 C751.0 694.1 763.9 691.1 777.1 690.6 C790.3 690.1 814.9 692.9 825.0 691.7 C835.1 690.5 835.4 684.7 837.5 683.3" stroke="#111" stroke-width="1.6"/>
<path d="M743.8 697.9 C743.8 701.7 738.2 718.4 743.8 720.8 C749.3 723.3 769.8 713.5 777.1 712.5 C784.4 711.5 785.8 714.2 787.5 714.6" stroke="#222" stroke-width="1.4"/>
<path d="M781.2 702.1 C783.0 703.5 785.4 705.2 791.7 710.4 C797.9 715.6 814.2 729.5 818.8 733.3" stroke="#222" stroke-width="1.4"/>
<path d="M808.3 695.8 L818.8 733.3" stroke="#333" stroke-width="1.2"/>
<path d="M735.4 689.6 C734.7 693.8 731.9 705.2 731.2 714.6 C730.6 724.0 729.5 737.8 731.2 745.8 C733.0 753.8 737.2 758.3 741.7 762.5 C746.2 766.7 750.7 766.7 758.3 770.8 C766.0 775.0 775.7 779.5 787.5 787.5 C799.3 795.5 816.0 808.3 829.2 818.8 C842.4 829.2 860.4 844.8 866.7 850.0" stroke="#111" stroke-width="1.8"/>
<path d="M820.8 735.4 C825.7 739.6 841.7 752.8 850.0 760.4 C858.3 768.1 864.6 774.7 870.8 781.2 C877.1 787.8 882.3 794.1 887.5 800.0 C892.7 805.9 897.9 811.5 902.1 816.7 C906.2 821.9 907.6 826.4 912.5 831.2 C917.4 836.1 928.1 843.4 931.2 845.8" stroke="#111" stroke-width="1.8"/>
<path d="M839.6 687.5 C844.8 689.2 858.7 693.1 870.8 697.9 C883.0 702.8 898.6 709.4 912.5 716.7 C926.4 724.0 939.6 733.0 954.2 741.7 C968.8 750.3 992.4 764.2 1000.0 768.8" stroke="#111" stroke-width="1.8"/>
<path d="M868.8 772.9 C874.7 774.0 893.4 776.7 904.2 779.2 C914.9 781.6 919.8 783.0 933.3 787.5 C946.9 792.0 976.0 801.0 985.4 806.2 C994.8 811.5 990.6 814.2 989.6 818.8 C988.5 823.3 982.3 828.1 979.2 833.3 C976.0 838.5 972.9 838.9 970.8 850.0 C968.8 861.1 967.4 891.7 966.7 900.0" stroke="#111" stroke-width="1.8"/>
<path d="M841.7 741.7 C846.5 744.4 863.5 755.9 870.8 758.3 C878.1 760.8 878.8 755.9 885.4 756.2 C892.0 756.6 906.3 759.7 910.4 760.4" stroke="#333" stroke-width="1.2"/>
<path d="M791.7 772.9 C794.4 775.0 802.4 780.6 808.3 785.4 C814.2 790.3 824.0 799.3 827.1 802.1" stroke="#333" stroke-width="1.2"/>
<path d="M860.4 854.2 C859.7 858.7 859.7 873.6 856.2 881.2 C852.8 888.9 842.4 896.9 839.6 900.0" stroke="#111" stroke-width="1.6"/>
<path d="M931.2 845.8 C928.8 850.0 922.6 863.2 916.7 870.8 C910.8 878.5 900.0 886.8 895.8 891.7 C891.7 896.5 892.4 898.6 891.7 900.0" stroke="#111" stroke-width="1.6"/>
<path d="M800.0 620.8 L797.9 635.4" stroke="#333" stroke-width="1.2"/>
<path d="M777.1 658.3 L785.4 650.0" stroke="#333" stroke-width="1.2"/>
<path d="M829.2 637.5 L839.6 627.1" stroke="#333" stroke-width="1.2"/>
<path d="M860.0 860.0 C859.3 863.5 858.6 876.0 855.8 880.8 C853.1 885.7 846.5 885.7 843.3 889.2 C840.2 892.6 839.5 896.1 837.1 901.7 C834.7 907.2 831.5 912.1 828.8 922.5 C826.0 932.9 822.8 950.3 820.4 964.2 C818.0 978.1 816.2 993.7 814.2 1005.8 C812.1 1018.0 809.0 1026.7 807.9 1037.1 C806.9 1047.5 807.6 1056.9 807.9 1068.3 C808.3 1079.8 809.7 1099.6 810.0 1105.8" stroke="#111" stroke-width="1.6"/>
<path d="M922.5 860.0 C919.7 864.2 911.4 876.0 905.8 885.0 C900.3 894.0 894.0 905.1 889.2 914.2 C884.3 923.2 881.5 928.1 876.7 939.2 C871.8 950.3 864.9 968.0 860.0 980.8 C855.1 993.7 851.0 1005.1 847.5 1016.2 C844.0 1027.4 841.6 1037.1 839.2 1047.5 C836.7 1057.9 834.0 1073.5 832.9 1078.8" stroke="#111" stroke-width="1.5"/>
<path d="M889.2 897.5 C891.9 894.7 900.3 886.7 905.8 880.8 C911.4 874.9 919.7 865.2 922.5 862.1" stroke="#222" stroke-width="1.4"/>
<path d="M837.1 899.6 C837.8 903.4 833.3 917.6 841.2 922.5 C849.2 927.4 877.7 927.7 885.0 928.8" stroke="#0a0a0a" stroke-width="3.0"/>
<path d="M843.3 926.7 C841.6 933.6 835.7 959.3 832.9 968.3 C830.1 977.4 827.7 978.8 826.7 980.8" stroke="#0a0a0a" stroke-width="2.6"/>
<path d="M824.6 962.1 C825.6 964.2 824.2 972.5 830.8 974.6 C837.4 976.7 858.6 974.6 864.2 974.6" stroke="#111" stroke-width="1.4"/>
<path d="M807.9 1060.0 C806.2 1064.9 800.6 1081.5 797.5 1089.2 C794.4 1096.8 793.0 1101.3 789.2 1105.8 C785.3 1110.3 777.0 1111.4 774.6 1116.2 C772.2 1121.1 772.5 1132.9 774.6 1135.0 C776.7 1137.1 781.2 1128.1 787.1 1128.8 C793.0 1129.4 806.2 1137.4 810.0 1139.2" stroke="#111" stroke-width="1.6"/>
<path d="M832.9 1072.5 C834.7 1077.0 839.2 1091.6 843.3 1099.6 C847.5 1107.6 851.3 1112.4 857.9 1120.4 C864.5 1128.4 878.8 1143.0 882.9 1147.5" stroke="#111" stroke-width="1.6"/>
<path d="M812.1 1120.4 C813.8 1123.9 820.1 1134.7 822.5 1141.2 C824.9 1147.8 826.0 1156.9 826.7 1160.0" stroke="#111" stroke-width="1.6"/>
<path d="M868.3 1155.8 C872.5 1155.5 887.1 1153.1 893.3 1153.8 C899.6 1154.4 903.8 1159.0 905.8 1160.0" stroke="#111" stroke-width="1.6"/>
<path d="M968.3 860.0 C967.6 865.2 964.9 882.6 964.2 891.2 C963.5 899.9 963.5 907.6 964.2 912.1 C964.9 916.6 965.9 918.0 968.3 918.3 C970.8 918.7 971.8 916.2 978.8 914.2 C985.7 912.1 1004.8 907.2 1010.0 905.8" stroke="#0a0a0a" stroke-width="2.4"/>
<path d="M978.8 916.2 L976.7 970.4" stroke="#0a0a0a" stroke-width="2.4"/>
<path d="M966.2 972.5 C970.1 971.5 982.6 968.0 989.2 966.2 C995.8 964.5 1003.1 962.8 1005.8 962.1" stroke="#111" stroke-width="1.4"/>
<path d="M966.2 918.3 C965.6 929.4 963.8 965.2 962.1 985.0 C960.3 1004.8 956.9 1028.4 955.8 1037.1" stroke="#111" stroke-width="1.8"/>
<path d="M1022.5 860.0 C1020.4 866.9 1013.8 887.8 1010.0 901.7 C1006.2 915.6 1003.1 927.7 999.6 943.3 C996.1 959.0 991.6 979.1 989.2 995.4 C986.7 1011.7 985.7 1033.6 985.0 1041.2" stroke="#111" stroke-width="1.6"/>
<path d="M1010.0 918.3 L995.4 972.5" stroke="#222" stroke-width="1.4"/>
<path d="M945.4 1045.4 C944.0 1049.2 939.9 1059.3 937.1 1068.3 C934.3 1077.4 930.1 1092.6 928.8 1099.6 C927.4 1106.5 922.2 1107.2 928.8 1110.0 C935.3 1112.8 956.5 1113.1 968.3 1116.2 C980.1 1119.4 990.9 1126.3 999.6 1128.8 C1008.3 1131.2 1016.9 1130.5 1020.4 1130.8" stroke="#111" stroke-width="1.6"/>
<path d="M982.9 1064.2 C985.3 1067.6 992.3 1077.7 997.5 1085.0 C1002.7 1092.3 1005.1 1102.4 1014.2 1107.9 C1023.2 1113.5 1040.2 1115.6 1051.7 1118.3 C1063.1 1121.1 1072.8 1122.8 1082.9 1124.6 C1093.0 1126.3 1109.7 1127.7 1112.1 1128.8 C1114.5 1129.8 1107.6 1129.4 1097.5 1130.8 C1087.4 1132.2 1059.3 1136.0 1051.7 1137.1" stroke="#111" stroke-width="1.6"/>
<path d="M932.9 1118.3 C937.4 1116.8 952.4 1110.0 960.0 1109.0 C967.6 1107.9 972.2 1109.1 978.8 1112.1 C985.3 1115.0 995.4 1122.8 999.6 1126.7 C1003.8 1130.5 999.9 1134.0 1003.8 1135.0 C1007.6 1136.0 1015.2 1133.6 1022.5 1132.9 C1029.8 1132.2 1043.3 1131.2 1047.5 1130.8" stroke="#111" stroke-width="1.6"/>
<path d="M1121.5 1132.9 L1122.5 1141.2" stroke="#111" stroke-width="1.8"/>
<path d="M1141.2 860.0 C1142.6 877.4 1146.5 928.4 1149.6 964.2 C1152.7 999.9 1158.3 1056.2 1160.0 1074.6" stroke="#111" stroke-width="2.0"/>
<path d="M530.8 380.0 C531.1 408.7 531.8 494.8 532.5 552.2 C533.2 609.6 533.5 674.2 535.1 724.4 C536.8 774.7 539.6 807.7 542.4 853.6 C545.3 899.5 550.7 975.6 552.3 1000.0" stroke="#111" stroke-width="1.8"/>
<path d="M551.3 980.0 C552.4 995.3 555.8 1039.6 558.1 1071.7 C560.4 1103.8 563.9 1155.7 565.0 1172.5" stroke="#111" stroke-width="1.5"/>
<path d="M615.4 1193.1 C633.0 1194.4 680.3 1198.9 720.8 1200.9 C761.3 1203.0 812.5 1205.7 858.3 1205.5 C904.2 1205.3 945.4 1204.2 995.8 1200.0 C1046.3 1195.8 1133.3 1183.6 1160.8 1180.3" stroke="#111" stroke-width="1.8"/>
<path d="M1183.8 1174.8 L1192.9 1172.5" stroke="#111" stroke-width="1.6"/>
<path d="M1151.7 980.0 C1153.6 999.1 1159.3 1057.2 1163.1 1094.6 C1167.0 1132.0 1172.7 1186.3 1174.6 1204.6" stroke="#111" stroke-width="1.8"/>
<path d="M828.5 1186.3 C833.5 1183.6 843.4 1173.6 858.3 1170.2 C873.2 1166.8 908.0 1166.4 917.9 1165.6" stroke="#111" stroke-width="1.8"/>
<path d="M867.5 1154.2 C874.4 1155.7 904.2 1164.9 908.8 1163.3 C913.3 1161.8 898.8 1148.8 895.0 1145.0 C891.2 1141.2 887.4 1141.2 885.8 1140.4" stroke="#111" stroke-width="1.4"/>
<circle cx="411.5" cy="1110.6" r="1.5" fill="#111" stroke="none" opacity="1.00"/>
<circle cx="477.0" cy="1164.3" r="1.5" fill="#111" stroke="none" opacity="1.00"/>
<circle cx="666.3" cy="1157.4" r="1.5" fill="#111" stroke="none" opacity="1.00"/>
<circle cx="417.4" cy="1261.0" r="1.5" fill="#111" stroke="none" opacity="1.00"/>
<circle cx="582.0" cy="1328.3" r="1.5" fill="#111" stroke="none" opacity="1.00"/>
<circle cx="529.3" cy="1355.8" r="1.5" fill="#111" stroke="none" opacity="1.00"/>
<circle cx="1236.9" cy="1155.1" r="1.5" fill="#111" stroke="none" opacity="1.00"/>
<path d="M940.0 728.3 C946.7 733.1 962.2 745.6 980.0 756.7 C997.8 767.8 1035.6 788.6 1046.7 795.0" stroke="#111" stroke-width="1.8"/>
<path d="M1048.3 801.7 C1046.4 804.7 1040.3 814.4 1036.7 820.0 C1033.1 825.6 1028.9 830.3 1026.7 835.0 C1024.4 839.7 1025.8 837.5 1023.3 848.3 C1020.8 859.2 1013.6 891.4 1011.7 900.0" stroke="#111" stroke-width="1.6"/>
<path d="M1048.3 810.0 L1028.3 840.0" stroke="#111" stroke-width="1.4"/>
<path d="M988.3 815.0 C985.8 818.3 976.9 827.5 973.3 835.0 C969.7 842.5 968.1 849.2 966.7 860.0 C965.3 870.8 965.3 893.3 965.0 900.0" stroke="#111" stroke-width="2.0"/>
<path d="M1010.0 820.0 C1010.3 822.8 1010.3 832.8 1011.7 836.7 C1013.1 840.6 1015.8 841.7 1018.3 843.3 C1020.8 845.0 1025.3 846.1 1026.7 846.7" stroke="#111" stroke-width="1.3"/>
<path d="M993.3 845.0 C992.8 848.9 991.7 860.8 990.0 868.3 C988.3 875.8 984.4 886.4 983.3 890.0" stroke="#333" stroke-width="1.0"/>
<path d="M1133.3 660.0 C1133.6 671.1 1133.9 701.7 1135.0 726.7 C1136.1 751.7 1138.2 781.1 1140.0 810.0 C1141.8 838.9 1144.9 885.0 1145.8 900.0" stroke="#111" stroke-width="2.0"/>
<path d="M1555.0 242.5 C1555.4 233.1 1555.0 194.6 1557.5 186.2 C1560.0 177.9 1565.0 190.6 1570.0 192.5 C1575.0 194.4 1584.6 194.6 1587.5 197.5 C1590.4 200.4 1587.9 203.8 1587.5 210.0 C1587.1 216.2 1585.4 230.8 1585.0 235.0" stroke="#111" stroke-width="1.5"/>
<path d="M1555.0 243.8 C1556.7 243.3 1562.5 241.5 1565.0 241.2 C1567.5 241.0 1569.2 242.3 1570.0 242.5" stroke="#111" stroke-width="1.5"/>
<path d="M1566.2 242.5 C1566.0 246.2 1566.0 260.0 1565.0 265.0 C1564.0 270.0 1560.8 271.2 1560.0 272.5" stroke="#111" stroke-width="1.5"/>
<path d="M1580.0 240.0 C1580.2 245.8 1577.5 268.5 1581.2 275.0 C1585.0 281.5 1599.0 278.1 1602.5 278.8" stroke="#111" stroke-width="1.5"/>
<path d="M1560.0 272.5 C1556.7 272.9 1544.6 273.8 1540.0 275.0 C1535.4 276.2 1532.1 278.8 1532.5 280.0 C1532.9 281.2 1540.8 282.1 1542.5 282.5" stroke="#111" stroke-width="1.5"/>
<path d="M1542.5 282.5 C1538.8 285.4 1527.1 295.4 1520.0 300.0 C1512.9 304.6 1506.7 307.7 1500.0 310.0 C1493.3 312.3 1483.3 313.1 1480.0 313.8" stroke="#111" stroke-width="1.5"/>
<path d="M1455.0 235.0 C1457.1 242.5 1463.3 267.1 1467.5 280.0 C1471.7 292.9 1477.9 307.1 1480.0 312.5" stroke="#111" stroke-width="1.5"/>
<path d="M1452.5 262.5 C1454.2 267.1 1458.3 279.4 1462.5 290.0 C1466.7 300.6 1475.0 320.2 1477.5 326.2" stroke="#111" stroke-width="1.5"/>
<path d="M1493.8 326.2 C1499.0 324.0 1515.6 316.5 1525.0 312.5 C1534.4 308.5 1545.8 304.2 1550.0 302.5" stroke="#111" stroke-width="1.5"/>
<path d="M1595.0 292.5 C1596.7 293.8 1597.1 296.7 1605.0 300.0 C1612.9 303.3 1636.0 311.2 1642.5 312.5 C1649.0 313.8 1643.5 308.3 1643.8 307.5" stroke="#111" stroke-width="1.5"/>
<path d="M1643.8 307.5 C1644.8 312.9 1648.1 324.2 1650.0 340.0 C1651.9 355.8 1654.2 392.1 1655.0 402.5" stroke="#111" stroke-width="1.5"/>
<path d="M1573.8 316.2 C1579.0 316.9 1594.4 317.3 1605.0 320.0 C1615.6 322.7 1630.8 325.0 1637.5 332.5 C1644.2 340.0 1642.9 353.8 1645.0 365.0 C1647.1 376.2 1649.2 394.2 1650.0 400.0" stroke="#111" stroke-width="1.5"/>
<path d="M1552.5 287.5 C1552.5 296.2 1551.7 326.7 1552.5 340.0 C1553.3 353.3 1556.7 362.9 1557.5 367.5" stroke="#111" stroke-width="1.5"/>
<path d="M1587.5 315.0 C1587.1 323.3 1585.4 350.4 1585.0 365.0 C1584.6 379.6 1585.0 396.2 1585.0 402.5" stroke="#111" stroke-width="1.5"/>
<path d="M1503.8 327.5 C1504.8 333.8 1507.7 344.6 1510.0 365.0 C1512.3 385.4 1516.2 435.8 1517.5 450.0" stroke="#111" stroke-width="1.5"/>
<path d="M1508.8 330.0 C1512.3 335.8 1522.3 352.9 1530.0 365.0 C1537.7 377.1 1549.6 395.0 1555.0 402.5 C1560.4 410.0 1561.2 408.8 1562.5 410.0" stroke="#111" stroke-width="1.5"/>
<path d="M1520.0 377.5 L1525.0 450.0" stroke="#111" stroke-width="1.5"/>
<path d="M1522.5 367.5 C1525.4 373.3 1534.6 390.4 1540.0 402.5 C1545.4 414.6 1552.5 433.8 1555.0 440.0" stroke="#111" stroke-width="1.5"/>
<path d="M1556.2 377.5 L1555.0 450.0" stroke="#111" stroke-width="1.5"/>
<path d="M1562.5 410.0 L1555.0 450.0" stroke="#111" stroke-width="1.5"/>
<path d="M1582.5 390.0 L1582.5 440.0" stroke="#111" stroke-width="1.5"/>
<path d="M1497.5 450.0 C1495.4 445.4 1487.5 430.8 1485.0 422.5 C1482.5 414.2 1481.7 401.2 1482.5 400.0 C1483.3 398.8 1487.1 406.7 1490.0 415.0 C1492.9 423.3 1498.3 444.2 1500.0 450.0" stroke="#111" stroke-width="1.5"/>
<path d="M1387.5 115.0 L1390.0 131.2" stroke="#111" stroke-width="1.5"/>
<path d="M1475.0 138.8 L1480.0 138.8" stroke="#111" stroke-width="1.5"/>
<path d="M1700.0 172.5 C1696.7 165.4 1684.2 141.2 1680.0 130.0 C1675.8 118.8 1674.2 109.8 1675.0 105.0 C1675.8 100.2 1680.0 99.6 1685.0 101.2 C1690.0 102.9 1700.8 110.6 1705.0 115.0 C1709.2 119.4 1709.2 125.4 1710.0 127.5" stroke="#111" stroke-width="1.5"/>
<path d="M1680.0 112.5 C1682.5 113.3 1690.0 114.2 1695.0 117.5 C1700.0 120.8 1707.5 130.0 1710.0 132.5" stroke="#111" stroke-width="1.2"/>
<path d="M1712.5 135.0 C1714.6 140.0 1720.8 156.7 1725.0 165.0 C1729.2 173.3 1735.4 181.7 1737.5 185.0" stroke="#111" stroke-width="1.5"/>
<path d="M1700.0 172.5 C1701.2 172.9 1705.4 175.4 1707.5 175.0 C1709.6 174.6 1711.7 172.5 1712.5 170.0 C1713.3 167.5 1712.5 161.7 1712.5 160.0" stroke="#111" stroke-width="1.5"/>
<path d="M1715.0 182.5 L1722.5 202.5" stroke="#111" stroke-width="1.5"/>
<path d="M1720.0 197.5 C1718.3 199.2 1713.8 203.8 1710.0 207.5 C1706.2 211.2 1697.1 215.8 1697.5 220.0 C1697.9 224.2 1707.9 227.5 1712.5 232.5 C1717.1 237.5 1720.4 243.8 1725.0 250.0 C1729.6 256.2 1735.0 264.6 1740.0 270.0 C1745.0 275.4 1752.5 280.4 1755.0 282.5" stroke="#111" stroke-width="1.5"/>
<path d="M1737.5 185.0 C1740.4 187.1 1749.2 195.4 1755.0 197.5 C1760.8 199.6 1768.3 195.4 1772.5 197.5 C1776.7 199.6 1777.1 204.6 1780.0 210.0 C1782.9 215.4 1785.8 220.8 1790.0 230.0 C1794.2 239.2 1799.6 252.5 1805.0 265.0 C1810.4 277.5 1818.8 295.8 1822.5 305.0 C1826.2 314.2 1826.7 317.5 1827.5 320.0" stroke="#111" stroke-width="1.5"/>
<path d="M1745.0 202.5 C1745.8 204.6 1745.8 208.8 1750.0 215.0 C1754.2 221.2 1764.2 231.7 1770.0 240.0 C1775.8 248.3 1779.2 256.7 1785.0 265.0 C1790.8 273.3 1801.7 285.8 1805.0 290.0" stroke="#333" stroke-width="1.2"/>
<path d="M1795.0 235.0 C1796.7 240.0 1800.8 253.8 1805.0 265.0 C1809.2 276.2 1817.5 296.2 1820.0 302.5" stroke="#111" stroke-width="1.5"/>
<path d="M1720.0 235.0 C1720.5 239.2 1722.3 253.6 1723.2 260.0 C1724.1 266.4 1728.9 271.8 1725.3 273.2 C1721.7 274.6 1708.0 268.8 1701.7 268.3 C1695.3 267.9 1689.5 270.1 1687.1 270.4" stroke="#111" stroke-width="1.5"/>
<path d="M1740.0 250.0 C1740.0 251.7 1740.1 253.2 1739.9 260.0 C1739.6 266.8 1739.3 285.0 1738.5 290.6 C1737.7 296.1 1738.8 294.5 1735.0 293.3 C1731.2 292.2 1721.8 286.2 1715.6 283.6 C1709.3 281.1 1700.5 279.0 1697.5 278.1" stroke="#111" stroke-width="1.5"/>
<path d="M1675.3 321.1 C1677.4 321.6 1685.3 324.4 1687.8 323.9 C1690.2 323.4 1689.5 319.3 1689.9 318.3" stroke="#111" stroke-width="1.5"/>
<path d="M1693.3 321.1 C1698.2 318.8 1713.0 311.4 1722.5 307.2 C1732.0 303.1 1743.3 297.8 1750.3 296.1 C1757.2 294.4 1761.9 296.7 1764.2 296.8" stroke="#111" stroke-width="1.5"/>
<path d="M1697.5 335.7 C1700.5 333.0 1707.9 325.4 1715.6 319.7 C1723.2 314.1 1736.4 305.1 1743.3 301.7 C1750.3 298.2 1751.4 298.9 1757.2 298.9 C1763.0 298.9 1771.8 299.4 1778.1 301.7 C1784.3 304.0 1791.9 310.9 1794.7 312.8" stroke="#111" stroke-width="1.5"/>
<path d="M1769.7 283.6 C1772.3 285.2 1779.4 290.6 1785.0 293.3 C1790.6 296.1 1799.8 299.8 1803.1 300.3 C1806.3 300.7 1804.2 296.8 1804.4 296.1" stroke="#111" stroke-width="1.3"/>
<path d="M1804.4 285.0 C1805.4 287.8 1809.1 295.2 1810.0 301.7 C1810.9 308.1 1810.0 320.2 1810.0 323.9" stroke="#111" stroke-width="1.5"/>
<path d="M1754.4 321.1 C1754.9 321.6 1752.1 323.0 1757.2 323.9 C1762.3 324.8 1776.9 326.0 1785.0 326.7 C1793.1 327.4 1801.2 329.0 1805.8 328.1 C1810.5 327.1 1811.6 322.3 1812.8 321.1" stroke="#111" stroke-width="1.5"/>
<path d="M1812.8 321.1 C1815.1 320.9 1822.0 319.3 1826.7 319.7 C1831.3 320.2 1837.8 321.3 1840.6 323.9 C1843.3 326.4 1842.9 333.1 1843.3 335.0" stroke="#111" stroke-width="1.5"/>
<path d="M1819.7 329.4 C1819.0 329.0 1817.9 326.9 1815.6 326.7 C1813.2 326.4 1809.5 326.7 1805.8 328.1 C1802.1 329.4 1796.1 332.5 1793.3 335.0 C1790.6 337.5 1789.6 340.6 1789.2 343.3 C1788.7 346.1 1788.9 350.7 1790.6 351.7 C1792.2 352.6 1796.1 351.4 1798.9 348.9 C1801.7 346.3 1805.8 338.5 1807.2 336.4" stroke="#111" stroke-width="1.5"/>
<path d="M1801.7 355.8 C1802.4 352.8 1804.0 342.2 1805.8 337.8 C1807.7 333.4 1810.5 331.1 1812.8 329.4 C1815.1 327.8 1818.6 328.3 1819.7 328.1" stroke="#111" stroke-width="1.5"/>
<path d="M1816.9 340.6 C1820.0 339.2 1832.5 330.8 1835.0 332.2 C1837.5 333.6 1832.7 346.1 1832.2 348.9" stroke="#111" stroke-width="1.5"/>
<path d="M1675.3 321.1 C1676.4 323.2 1679.2 328.8 1682.2 333.6 C1685.2 338.5 1691.5 347.5 1693.3 350.3" stroke="#111" stroke-width="1.5"/>
<path d="M1691.9 347.5 C1695.2 351.0 1704.7 360.5 1711.4 368.3 C1718.1 376.2 1728.8 390.3 1732.2 394.7" stroke="#111" stroke-width="1.5"/>
<path d="M1697.5 347.5 C1700.5 350.0 1709.1 357.5 1715.6 362.8 C1722.0 368.1 1730.8 375.0 1736.4 379.4 C1741.9 383.8 1745.4 384.8 1748.9 389.2 C1752.4 393.6 1755.1 401.9 1757.2 405.8 C1759.3 409.8 1759.5 410.5 1761.4 412.8 C1763.2 415.1 1767.2 418.6 1768.3 419.7" stroke="#111" stroke-width="1.5"/>
<path d="M1719.7 341.9 C1720.6 343.1 1721.8 346.8 1725.3 348.9 C1728.8 351.0 1736.6 352.1 1740.6 354.4 C1744.5 356.8 1747.0 360.0 1748.9 362.8 C1750.7 365.6 1749.8 366.2 1751.7 371.1 C1753.5 376.0 1757.7 386.2 1760.0 391.9 C1762.3 397.7 1764.2 401.2 1765.6 405.8 C1766.9 410.5 1767.9 417.4 1768.3 419.7" stroke="#111" stroke-width="1.5"/>
<path d="M1736.4 380.8 C1737.1 383.8 1738.2 391.7 1740.6 398.9 C1742.9 406.1 1752.6 418.1 1750.3 423.9 C1748.0 429.7 1730.6 432.0 1726.7 433.6" stroke="#111" stroke-width="1.5"/>
<path d="M1730.8 397.5 C1731.3 398.9 1733.8 400.5 1733.6 405.8 C1733.4 411.2 1733.6 425.3 1729.4 429.4 C1725.3 433.6 1713.9 430.5 1708.6 430.8 C1703.3 431.2 1695.0 430.6 1697.5 431.5 C1700.0 432.5 1718.8 437.7 1723.9 436.4 C1729.0 435.1 1727.4 426.0 1728.1 423.9" stroke="#111" stroke-width="1.5"/>
<path d="M1758.6 405.8 C1758.8 408.1 1760.2 414.9 1760.0 419.7 C1759.8 424.6 1759.1 430.4 1757.2 435.0 C1755.4 439.6 1753.1 444.5 1748.9 447.5 C1744.7 450.5 1735.0 452.1 1732.2 453.1" stroke="#111" stroke-width="1.5"/>
<path d="M1721.1 446.1 C1723.0 446.1 1727.6 446.3 1732.2 446.1 C1736.9 445.9 1745.0 445.2 1748.9 444.7 C1752.8 444.3 1754.7 443.6 1755.8 443.3" stroke="#111" stroke-width="1.5"/>
<path d="M1740.6 329.4 C1738.7 329.7 1734.1 329.7 1729.4 330.8 C1724.8 332.0 1716.2 334.8 1712.8 336.4 C1709.3 338.0 1709.1 338.9 1708.6 340.6 C1708.1 342.2 1708.8 344.7 1710.0 346.1 C1711.2 347.5 1714.6 348.4 1715.6 348.9" stroke="#111" stroke-width="1.3"/>
<path d="M1768.3 419.7 C1771.6 424.6 1787.3 445.2 1787.8 448.9 C1788.2 452.6 1776.2 442.9 1771.1 441.9 C1766.0 441.0 1759.5 443.1 1757.2 443.3" stroke="#111" stroke-width="1.5"/>
<path d="M1500.0 450.0 C1502.5 455.0 1511.9 472.9 1515.0 480.0 C1518.1 487.1 1518.1 490.4 1518.8 492.5" stroke="#111" stroke-width="1.5"/>
<path d="M1518.8 450.0 L1520.0 482.5" stroke="#111" stroke-width="1.5"/>
<path d="M1526.2 450.0 L1525.0 475.0" stroke="#111" stroke-width="1.5"/>
<path d="M1575.0 450.0 C1574.8 456.2 1572.9 475.0 1573.8 487.5 C1574.6 500.0 1579.0 518.8 1580.0 525.0" stroke="#111" stroke-width="1.5"/>
<path d="M1555.0 450.0 C1555.8 456.2 1556.7 472.9 1560.0 487.5 C1563.3 502.1 1570.8 522.9 1575.0 537.5 C1579.2 552.1 1580.4 564.6 1585.0 575.0 C1589.6 585.4 1598.8 594.0 1602.5 600.0 C1606.2 606.0 1607.9 610.4 1607.5 611.2 C1607.1 612.1 1603.8 610.2 1600.0 605.0 C1596.2 599.8 1588.5 589.2 1585.0 580.0 C1581.5 570.8 1579.6 557.5 1578.8 550.0 C1577.9 542.5 1579.8 537.5 1580.0 535.0" stroke="#111" stroke-width="1.5"/>
<path d="M1416.7 589.4 C1421.1 588.7 1435.4 585.2 1443.3 585.0 C1451.3 584.8 1460.9 587.8 1464.4 588.3" stroke="#111" stroke-width="1.8"/>
<path d="M1416.7 589.4 C1420.2 590.0 1429.8 593.0 1437.8 592.8 C1445.7 592.6 1460.0 589.1 1464.4 588.3" stroke="#111" stroke-width="1.6"/>
<path d="M1434.4 559.4 C1435.2 560.6 1436.9 563.1 1438.9 566.1 C1440.9 569.1 1442.4 573.5 1446.7 577.2 C1450.9 580.9 1461.5 586.5 1464.4 588.3" stroke="#111" stroke-width="1.6"/>
<path d="M1428.9 602.8 C1431.3 601.3 1438.0 596.5 1443.3 593.9 C1448.7 591.3 1458.1 588.3 1461.1 587.2" stroke="#111" stroke-width="2.2"/>
<path d="M1432.2 609.4 C1434.4 608.1 1440.4 604.3 1445.6 601.7 C1450.7 599.1 1460.4 595.2 1463.3 593.9" stroke="#111" stroke-width="2.0"/>
<path d="M1435.6 617.2 C1436.9 615.6 1440.2 610.0 1443.3 607.2 C1446.5 604.4 1452.6 601.7 1454.4 600.6" stroke="#111" stroke-width="1.6"/>
<path d="M1452.2 597.2 C1454.8 597.3 1461.9 597.6 1467.8 597.8 C1473.7 598.0 1480.6 598.4 1487.8 598.3 C1495.0 598.2 1507.2 597.4 1511.1 597.2" stroke="#111" stroke-width="1.6"/>
<path d="M1481.1 588.3 C1483.0 587.4 1490.0 582.8 1492.2 582.8 C1494.4 582.8 1494.1 587.4 1494.4 588.3" stroke="#111" stroke-width="1.5"/>
<path d="M1494.4 595.0 C1495.0 593.0 1496.9 586.7 1497.8 582.8 C1498.7 578.9 1499.8 570.7 1500.0 571.7 C1500.2 572.6 1499.6 584.6 1498.9 588.3 C1498.1 592.0 1496.1 593.0 1495.6 593.9" stroke="#111" stroke-width="1.6"/>
<path d="M1511.1 597.2 L1507.8 622.8" stroke="#111" stroke-width="1.6"/>
<path d="M1483.3 609.4 C1484.4 608.3 1487.8 604.1 1490.0 602.8 C1492.2 601.5 1495.6 601.9 1496.7 601.7" stroke="#111" stroke-width="1.5"/>
<path d="M1440.0 617.2 C1442.0 620.2 1448.9 626.9 1452.2 635.0 C1455.6 643.1 1457.8 656.3 1460.0 666.1 C1462.2 675.9 1463.7 688.3 1465.6 693.9 C1467.4 699.4 1468.9 697.4 1471.1 699.4 C1473.3 701.5 1476.1 706.5 1478.9 706.1 C1481.7 705.7 1485.4 702.0 1487.8 697.2 C1490.2 692.4 1491.7 681.9 1493.3 677.2 C1495.0 672.6 1495.9 672.2 1497.8 669.4 C1499.6 666.7 1503.3 662.0 1504.4 660.6" stroke="#111" stroke-width="1.8"/>
<path d="M1452.2 627.2 C1453.5 627.8 1456.9 626.3 1460.0 630.6 C1463.1 634.8 1468.3 643.5 1471.1 652.8 C1473.9 662.0 1475.7 680.6 1476.7 686.1" stroke="#111" stroke-width="1.8"/>
<path d="M1447.8 605.0 C1448.7 609.6 1450.7 620.7 1453.3 632.8 C1455.9 644.8 1461.7 669.8 1463.3 677.2" stroke="#111" stroke-width="1.6"/>
<path d="M1448.9 641.7 C1450.2 644.8 1454.3 655.0 1456.7 660.6 C1459.1 666.1 1462.2 672.6 1463.3 675.0" stroke="#111" stroke-width="2.0"/>
<path d="M1478.9 647.2 C1479.4 643.9 1480.4 630.9 1482.2 627.2 C1484.1 623.5 1488.5 622.2 1490.0 625.0 C1491.5 627.8 1491.5 638.3 1491.1 643.9 C1490.7 649.4 1488.3 655.9 1487.8 658.3" stroke="#111" stroke-width="1.6"/>
<path d="M1494.4 658.3 C1495.6 655.0 1498.5 643.0 1501.1 638.3 C1503.7 633.7 1508.3 630.6 1510.0 630.6 C1511.7 630.6 1512.0 634.3 1511.1 638.3 C1510.2 642.4 1506.9 650.0 1504.4 655.0 C1502.0 660.0 1498.0 666.1 1496.7 668.3" stroke="#111" stroke-width="1.6"/>
<path d="M1485.6 617.2 L1490.0 621.7" stroke="#111" stroke-width="1.4"/>
<path d="M1467.8 696.1 L1466.7 715.0" stroke="#111" stroke-width="1.6"/>
<path d="M1495.6 671.7 L1496.7 710.6" stroke="#111" stroke-width="1.6"/>
<path d="M1465.0 707.5 L1450.0 717.5" stroke="#111" stroke-width="1.5"/>
<path d="M1437.5 722.5 L1450.0 721.2" stroke="#111" stroke-width="1.2"/>
<path d="M1500.0 712.5 L1517.5 720.0" stroke="#111" stroke-width="1.5"/>
<path d="M1505.0 725.0 C1509.2 723.8 1521.7 719.4 1530.0 717.5 C1538.3 715.6 1550.8 714.4 1555.0 713.8" stroke="#111" stroke-width="1.5"/>
<path d="M1427.5 730.0 C1423.8 729.8 1410.4 727.5 1405.0 728.8 C1399.6 730.0 1396.2 732.7 1395.0 737.5 C1393.8 742.3 1396.2 751.2 1397.5 757.5 C1398.8 763.8 1401.7 766.2 1402.5 775.0 C1403.3 783.8 1402.5 804.2 1402.5 810.0" stroke="#111" stroke-width="1.5"/>
<path d="M1557.5 717.5 C1559.6 717.9 1567.5 716.7 1570.0 720.0 C1572.5 723.3 1573.3 729.6 1572.5 737.5 C1571.7 745.4 1566.2 762.5 1565.0 767.5" stroke="#111" stroke-width="1.5"/>
<path d="M1440.0 732.5 L1460.0 738.8" stroke="#111" stroke-width="1.5"/>
<path d="M1472.5 740.0 C1473.3 740.6 1475.4 744.2 1477.5 743.8 C1479.6 743.3 1481.2 739.8 1485.0 737.5 C1488.8 735.2 1497.5 731.2 1500.0 730.0" stroke="#111" stroke-width="1.5"/>
<path d="M1415.0 760.0 C1417.5 764.2 1425.8 779.2 1430.0 785.0 C1434.2 790.8 1438.3 793.3 1440.0 795.0" stroke="#111" stroke-width="1.5"/>
<path d="M1472.5 760.0 C1472.9 762.1 1473.3 767.9 1475.0 772.5 C1476.7 777.1 1481.2 785.0 1482.5 787.5" stroke="#111" stroke-width="1.5"/>
<path d="M1442.5 780.0 L1445.0 781.2" stroke="#111" stroke-width="2.0"/>
<path d="M1507.5 775.0 L1517.5 770.0" stroke="#111" stroke-width="2.0"/>
<path d="M1550.0 747.5 C1547.5 751.2 1538.8 763.8 1535.0 770.0 C1531.2 776.2 1529.2 778.3 1527.5 785.0 C1525.8 791.7 1525.4 805.8 1525.0 810.0" stroke="#111" stroke-width="1.5"/>
<path d="M1562.5 770.0 L1560.0 810.0" stroke="#111" stroke-width="1.5"/>
<path d="M1530.0 782.5 L1535.0 810.0" stroke="#111" stroke-width="1.5"/>
<path d="M1432.5 790.0 L1432.5 810.0" stroke="#111" stroke-width="1.5"/>
<circle cx="1802.0" cy="521.8" r="1.5" fill="#111" stroke="none" opacity="1.00"/>
<path d="M1402.5 800.0 L1406.7 852.1" stroke="#111" stroke-width="1.5"/>
<path d="M1400.4 883.3 C1400.4 890.3 1399.0 911.8 1400.4 925.0 C1401.8 938.2 1407.4 956.2 1408.8 962.5" stroke="#111" stroke-width="1.5"/>
<path d="M1427.5 837.5 C1425.1 839.9 1417.4 844.8 1412.9 852.1 C1408.4 859.4 1401.5 876.2 1400.4 881.2 C1399.4 886.3 1405.6 882.1 1406.7 882.3" stroke="#111" stroke-width="1.5"/>
<path d="M1431.7 800.0 L1429.6 835.4" stroke="#111" stroke-width="1.5"/>
<path d="M1426.5 852.1 L1419.2 956.2" stroke="#111" stroke-width="1.5"/>
<path d="M1435.8 800.0 C1436.9 810.4 1441.4 848.6 1442.1 862.5 C1442.8 876.4 1441.7 879.9 1440.0 883.3 C1438.3 886.8 1433.1 876.4 1431.7 883.3 C1430.3 890.3 1432.0 904.2 1431.7 925.0 C1431.3 945.8 1429.9 979.2 1429.6 1008.3 C1429.2 1037.5 1429.6 1084.7 1429.6 1100.0" stroke="#111" stroke-width="1.8"/>
<path d="M1421.2 892.7 C1424.4 892.2 1432.7 888.9 1440.0 889.6 C1447.3 890.3 1455.6 896.2 1465.0 896.9 C1474.4 897.6 1485.8 896.0 1496.2 893.8 C1506.7 891.5 1520.9 886.8 1527.5 883.3 C1534.1 879.9 1534.4 874.7 1535.8 872.9" stroke="#111" stroke-width="1.7"/>
<path d="M1433.8 897.9 C1437.2 900.7 1447.6 906.9 1454.6 914.6 C1461.5 922.2 1470.9 938.5 1475.4 943.8 C1479.9 949.0 1478.2 949.7 1481.7 945.8 C1485.1 942.0 1488.6 930.2 1496.2 920.8 C1503.9 911.5 1522.3 894.8 1527.5 889.6" stroke="#111" stroke-width="1.7"/>
<path d="M1402.5 970.8 C1401.5 975.3 1398.3 988.2 1396.2 997.9 C1394.2 1007.6 1391.0 1018.8 1390.0 1029.2 C1389.0 1039.6 1390.0 1055.2 1390.0 1060.4" stroke="#111" stroke-width="1.5"/>
<path d="M1390.0 997.9 C1388.3 1004.9 1381.7 1029.2 1379.6 1039.6 C1377.5 1050.0 1376.8 1057.3 1377.5 1060.4 C1378.2 1063.5 1382.7 1058.7 1383.8 1058.3" stroke="#111" stroke-width="1.5"/>
<path d="M1398.3 1008.3 C1398.0 1015.3 1395.6 1038.5 1396.2 1050.0 C1396.9 1061.5 1400.4 1071.9 1402.5 1077.1 C1404.6 1082.3 1407.7 1080.6 1408.8 1081.2" stroke="#111" stroke-width="1.5"/>
<path d="M1421.2 983.3 C1419.2 985.8 1411.5 992.0 1408.8 997.9 C1406.0 1003.8 1404.6 1010.1 1404.6 1018.8 C1404.6 1027.4 1407.5 1044.4 1408.8 1050.0 C1410.0 1055.6 1411.4 1051.7 1411.9 1052.1" stroke="#111" stroke-width="1.5"/>
<path d="M1423.3 987.5 C1423.3 991.0 1422.3 1000.0 1423.3 1008.3 C1424.4 1016.7 1428.5 1032.6 1429.6 1037.5" stroke="#333" stroke-width="1.2"/>
<path d="M1479.6 945.8 C1478.5 952.8 1475.4 973.6 1473.3 987.5 C1471.2 1001.4 1468.5 1015.3 1467.1 1029.2 C1465.7 1043.1 1466.4 1061.1 1465.0 1070.8 C1463.6 1080.6 1459.8 1084.7 1458.8 1087.5" stroke="#111" stroke-width="1.5"/>
<path d="M1527.5 889.6 C1526.8 899.0 1525.1 929.5 1523.3 945.8 C1521.6 962.2 1519.9 971.9 1517.1 987.5 C1514.3 1003.1 1508.4 1030.9 1506.7 1039.6" stroke="#111" stroke-width="1.5"/>
<path d="M1525.4 800.0 L1519.2 870.8" stroke="#111" stroke-width="1.5"/>
<path d="M1558.8 800.0 C1558.8 810.4 1559.1 841.7 1558.8 862.5 C1558.4 883.3 1555.3 908.3 1556.7 925.0 C1558.1 941.7 1565.3 956.2 1567.1 962.5" stroke="#111" stroke-width="1.5"/>
<path d="M1531.7 800.0 C1533.4 805.2 1540.7 820.8 1542.1 831.2 C1543.5 841.7 1538.6 846.9 1540.0 862.5 C1541.4 878.1 1548.7 914.6 1550.4 925.0" stroke="#111" stroke-width="1.5"/>
<path d="M1546.2 929.2 C1545.6 933.7 1543.5 950.7 1542.1 956.2 C1540.7 961.8 1538.6 957.3 1537.9 962.5 C1537.2 967.7 1536.5 981.9 1537.9 987.5 C1539.3 993.1 1544.9 994.4 1546.2 995.8" stroke="#111" stroke-width="1.5"/>
<path d="M1537.9 962.5 C1540.3 962.5 1548.0 961.1 1552.5 962.5 C1557.0 963.9 1561.2 964.9 1565.0 970.8 C1568.8 976.7 1573.3 989.9 1575.4 997.9 C1577.5 1005.9 1578.5 1011.5 1577.5 1018.8 C1576.5 1026.0 1570.9 1039.2 1569.2 1041.7 C1567.4 1044.1 1566.4 1038.9 1567.1 1033.3 C1567.8 1027.8 1573.3 1016.7 1573.3 1008.3 C1573.3 1000.0 1569.9 989.2 1567.1 983.3 C1564.3 977.4 1558.4 974.7 1556.7 972.9" stroke="#111" stroke-width="1.5"/>
<path d="M1569.2 968.8 C1572.6 970.1 1584.8 973.3 1590.0 977.1 C1595.2 980.9 1599.0 986.8 1600.4 991.7 C1601.8 996.5 1599.7 1003.5 1598.3 1006.2 C1596.9 1009.0 1593.1 1008.0 1592.1 1008.3" stroke="#111" stroke-width="1.5"/>
<path d="M1560.8 977.1 L1558.8 1010.4" stroke="#111" stroke-width="2.0"/>
<path d="M1565.0 970.8 C1567.8 975.7 1578.5 988.9 1581.7 1000.0 C1584.8 1011.1 1583.4 1031.2 1583.8 1037.5" stroke="#111" stroke-width="1.5"/>
<path d="M1435.8 1045.8 C1437.2 1051.4 1441.7 1073.6 1444.2 1079.2 C1446.6 1084.7 1446.9 1085.4 1450.4 1079.2 C1453.9 1072.9 1462.6 1047.9 1465.0 1041.7" stroke="#111" stroke-width="1.5"/>
<path d="M1479.6 1037.5 C1479.6 1041.3 1477.8 1054.2 1479.6 1060.4 C1481.3 1066.7 1486.9 1076.7 1490.0 1075.0 C1493.1 1073.3 1496.9 1054.2 1498.3 1050.0" stroke="#111" stroke-width="1.5"/>
<path d="M1502.5 1054.2 C1502.5 1058.7 1501.5 1073.6 1502.5 1081.2 C1503.5 1088.9 1507.7 1096.9 1508.8 1100.0" stroke="#111" stroke-width="1.5"/>
<path d="M1469.2 1054.2 L1467.1 1100.0" stroke="#111" stroke-width="1.8"/>
<path d="M1469.2 1062.5 L1479.6 1100.0" stroke="#111" stroke-width="1.5"/>
<path d="M1465.0 804.2 L1460.8 831.2" stroke="#333" stroke-width="1.0"/>
<path d="M1481.7 837.5 L1479.6 856.2" stroke="#111" stroke-width="1.2"/>
<path d="M1533.8 837.5 C1534.1 839.2 1534.4 846.2 1535.8 847.9 C1537.2 849.7 1541.0 847.9 1542.1 847.9" stroke="#111" stroke-width="1.6"/>
<path d="M1448.3 883.3 L1460.8 900.0" stroke="#111" stroke-width="1.3"/>
<path d="M1506.7 870.8 L1500.4 891.7" stroke="#111" stroke-width="1.3"/>
<path d="M1429.6 1080.0 C1429.9 1090.4 1430.3 1123.4 1431.7 1142.5 C1433.1 1161.6 1435.8 1180.7 1437.9 1194.6 C1440.0 1208.5 1443.1 1220.6 1444.2 1225.8" stroke="#111" stroke-width="1.6"/>
<path d="M1431.7 1100.8 C1433.1 1111.2 1436.5 1142.8 1440.0 1163.3 C1443.5 1183.8 1450.4 1213.7 1452.5 1223.8" stroke="#333" stroke-width="1.1"/>
<path d="M1467.1 1080.0 C1467.8 1088.7 1471.6 1114.7 1471.2 1132.1 C1470.9 1149.4 1467.1 1168.5 1465.0 1184.2 C1462.9 1199.8 1460.1 1211.9 1458.8 1225.8 C1457.4 1239.7 1456.7 1252.2 1456.7 1267.5 C1456.7 1282.8 1458.4 1309.2 1458.8 1317.5" stroke="#111" stroke-width="1.6"/>
<path d="M1469.2 1090.4 C1468.1 1102.6 1464.3 1138.0 1462.9 1163.3 C1461.5 1188.7 1461.2 1229.3 1460.8 1242.5" stroke="#333" stroke-width="1.2"/>
<path d="M1427.5 1124.8 C1431.0 1125.7 1441.0 1128.3 1448.3 1130.0 C1455.6 1131.7 1467.4 1134.3 1471.2 1135.2" stroke="#111" stroke-width="1.8"/>
<path d="M1434.8 1180.0 C1437.0 1181.2 1443.3 1186.8 1448.3 1187.3 C1453.4 1187.8 1462.2 1183.8 1465.0 1183.1" stroke="#111" stroke-width="1.6"/>
<path d="M1450.4 1127.9 L1453.5 1198.8" stroke="#111" stroke-width="1.6"/>
<path d="M1442.1 1215.4 C1441.0 1220.6 1439.3 1237.6 1435.8 1246.7 C1432.4 1255.7 1421.9 1265.4 1421.2 1269.6 C1420.6 1273.8 1428.2 1267.5 1431.7 1271.7 C1435.1 1275.8 1440.3 1290.8 1442.1 1294.6" stroke="#111" stroke-width="1.8"/>
<path d="M1435.8 1305.0 C1435.8 1309.9 1435.1 1327.9 1435.8 1334.2 C1436.5 1340.4 1435.1 1342.5 1440.0 1342.5 C1444.9 1342.5 1457.7 1335.9 1465.0 1334.2 C1472.3 1332.4 1483.8 1334.2 1483.8 1332.1 C1483.8 1330.0 1468.8 1325.5 1465.0 1321.7 C1461.2 1317.8 1461.5 1311.2 1460.8 1309.2" stroke="#111" stroke-width="1.6"/>
<path d="M1502.5 1080.0 C1503.9 1085.2 1509.4 1100.8 1510.8 1111.2 C1512.2 1121.7 1510.5 1132.1 1510.8 1142.5 C1511.2 1152.9 1511.9 1164.7 1512.9 1173.8 C1514.0 1182.8 1515.3 1191.1 1517.1 1196.7 C1518.8 1202.2 1518.5 1198.4 1523.3 1207.1 C1528.2 1215.8 1545.6 1239.4 1546.2 1248.8 C1546.9 1258.1 1530.6 1252.9 1527.5 1263.3 C1524.4 1273.8 1527.5 1303.3 1527.5 1311.2" stroke="#111" stroke-width="1.8"/>
<path d="M1473.3 1080.0 C1474.7 1083.5 1478.9 1090.4 1481.7 1100.8 C1484.4 1111.2 1486.2 1125.1 1490.0 1142.5 C1493.8 1159.9 1502.2 1194.6 1504.6 1205.0" stroke="#111" stroke-width="1.6"/>
<path d="M1481.7 1136.2 C1484.4 1135.2 1492.1 1132.3 1498.3 1130.0 C1504.6 1127.7 1515.7 1123.9 1519.2 1122.7" stroke="#111" stroke-width="1.8"/>
<path d="M1492.1 1180.0 C1494.2 1180.3 1501.1 1185.2 1504.6 1182.1 C1508.1 1179.0 1511.5 1164.7 1512.9 1161.2" stroke="#111" stroke-width="1.6"/>
<path d="M1498.3 1134.2 L1504.6 1180.0" stroke="#111" stroke-width="1.6"/>
<path d="M1504.6 1217.5 C1505.6 1222.4 1510.5 1236.6 1510.8 1246.7 C1511.2 1256.7 1508.4 1271.0 1506.7 1277.9 C1504.9 1284.9 1501.5 1286.6 1500.4 1288.3" stroke="#111" stroke-width="1.8"/>
<path d="M1500.4 1288.3 C1496.2 1293.9 1476.1 1318.2 1475.4 1321.7 C1474.7 1325.1 1488.3 1310.7 1496.2 1309.2 C1504.2 1307.6 1518.8 1311.8 1523.3 1312.3" stroke="#111" stroke-width="1.8"/>
<circle cx="1481.2" cy="1289.4" r="1.5" fill="#111" stroke="none" opacity="1.00"/>
<circle cx="1432.7" cy="1350.8" r="1.0" fill="#111" stroke="none" opacity="1.00"/>
<circle cx="1867.9" cy="962.3" r="1.5" fill="#111" stroke="none" opacity="1.00"/>
<circle cx="1819.8" cy="1300.7" r="1.5" fill="#111" stroke="none" opacity="1.00"/>
<circle cx="1777.2" cy="1356.7" r="1.5" fill="#111" stroke="none" opacity="1.00"/>
<path d="M663.1 600.6 C666.3 597.8 676.7 589.0 682.5 583.9 C688.3 578.8 695.2 572.3 697.8 570.0" stroke="#111" stroke-width="1.6"/>
<path d="M686.7 550.6 C686.4 552.9 684.8 561.9 685.3 564.4 C685.7 567.0 687.8 566.5 689.4 565.8 C691.1 565.1 694.1 561.2 695.0 560.3" stroke="#111" stroke-width="1.4"/>
</svg>
</body></html>
